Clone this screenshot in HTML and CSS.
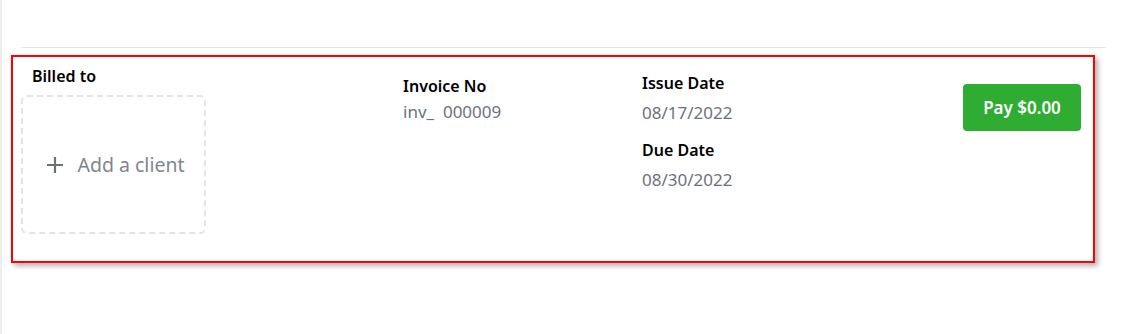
FILE: index.html
```html
<!DOCTYPE html>
<html lang="en">

<head>
  <meta charset="UTF-8">
  <meta name="viewport" content="width=device-width, initial-scale=1.0">
  <title>Invoice</title>
  <link rel="stylesheet" href="styles.css">
</head>

<body>
<div class="page">
  <div class="divider"></div>
  <div class="invoice-card">
    <div class="billed">
      <div class="label billed-title">Billed to</div>
      <div class="add-client">
        <svg class="plus" width="18" height="18" viewBox="0 0 18 18">
          <path d="M9 1v16M1 9h16" stroke="#6b7078" stroke-width="2.2" fill="none" />
        </svg>
        <span>Add a client</span>
      </div>
    </div>
    <div class="invoice-no">
      <div class="label">Invoice No</div>
      <div class="value">inv_&nbsp; 000009</div>
    </div>
    <div class="dates">
      <div class="label">Issue Date</div>
      <div class="value">08/17/2022</div>
      <div class="label due-label">Due Date</div>
      <div class="value">08/30/2022</div>
    </div>
    <button class="pay">Pay $0.00</button>
  </div>
</div>
</body>

</html>
```

FILE: styles.css
```css
body {
  margin: 0;
  font-family: 'Noto Sans', 'Open Sans', sans-serif;
  font-size: 16px;
  line-height: 22px;
  background: #fff;
}

.page {
  min-height: 100vh;
  border-left: 2px solid #eceef0;
  padding: 47px 30px 0 9px;
  box-sizing: border-box;
}

.divider {
  height: 1px;
  background: #e6e7e9;
  margin: 0 -11px 7px 10px;
}

.invoice-card {
  display: flex;
  align-items: flex-start;
  border: 2px solid #ff0000;
  box-shadow: 3px 3px 5px rgba(0, 0, 0, 0.3);
  padding: 8px 12px 27px 8px;
}

.label {
  font-weight: 600;
  color: #000;
}

.value {
  font-size: 17px;
  color: #6c727a;
}

.billed {
  width: 382px;
}

.billed-title {
  padding-left: 11px;
}

.add-client {
  display: flex;
  align-items: center;
  justify-content: center;
  width: 185px;
  height: 139px;
  margin-top: 8px;
  padding-left: 4px;
  box-sizing: border-box;
  border: 2px dashed #e2e4e8;
  border-radius: 6px;
  font-size: 19.5px;
  color: #80868e;
}

.plus {
  margin-right: 13px;
}

.invoice-no {
  width: 239px;
  margin-top: 10px;
}

.invoice-no .value {
  margin-top: 4px;
}

.dates {
  flex: 1;
  margin-top: 7px;
}

.dates .value {
  margin-top: 8px;
}

.dates .due-label {
  margin-top: 15px;
}

.pay {
  width: 118px;
  height: 47px;
  margin-top: 19px;
  border: none;
  border-radius: 4px;
  background: #2fad33;
  color: #fff;
  font-family: inherit;
  font-size: 17px;
  font-weight: 600;
}
```
